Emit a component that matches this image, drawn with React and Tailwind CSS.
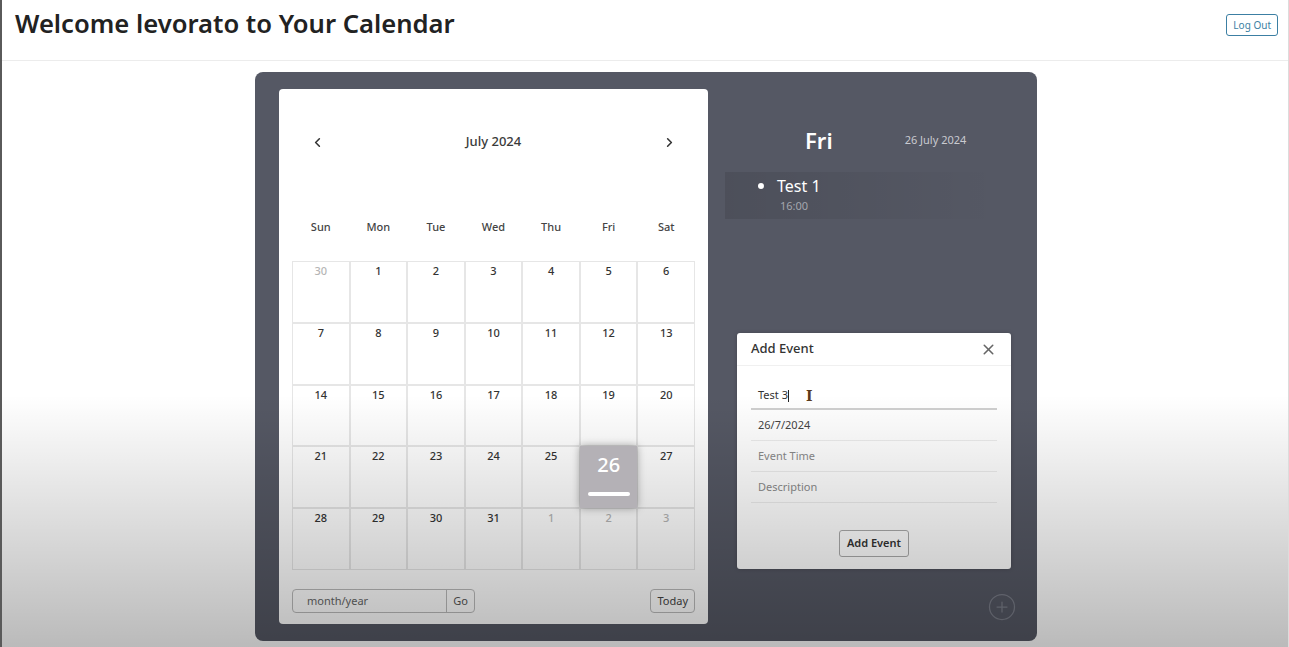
import { ChevronLeft, ChevronRight, X, CirclePlus } from 'lucide-react'

const DIAS = ['Sun', 'Mon', 'Tue', 'Wed', 'Thu', 'Fri', 'Sat']

const CELDAS = [
  [30, true], [1], [2], [3], [4], [5], [6],
  [7], [8], [9], [10], [11], [12], [13],
  [14], [15], [16], [17], [18], [19], [20],
  [21], [22], [23], [24], [25], [26, false, true], [27],
  [28], [29], [30], [31], [1, true], [2, true], [3, true],
]

function Calendario() {
  return (
    <div className="w-[429px] h-[535px] shrink-0 bg-white rounded-[4px] px-[13px] pt-[42px] flex flex-col">
      <div className="h-[22px] flex items-center justify-between px-[18px] text-[#333]">
        <ChevronLeft size={15} strokeWidth={2.5} />
        <span className="text-[13px] font-medium text-[#3a3a3a]">July 2024</span>
        <ChevronRight size={15} strokeWidth={2.5} />
      </div>
      <div className="mt-[64px] h-[20px] grid grid-cols-7 text-[11px] font-medium text-[#444] text-center items-center">
        {DIAS.map((d) => (
          <span key={d}>{d}</span>
        ))}
      </div>
      <div className="mt-[24px] grid grid-cols-7 grid-rows-5 h-[309px]">
        {CELDAS.map(([n, fuera, hoy], i) =>
          hoy ? (
            <div
              key={i}
              className="bg-[#b4b1b6] shadow-[0_0_8px_rgba(0,0,0,0.35)] flex flex-col items-center justify-between pt-[4px] pb-[12px] relative z-10"
            >
              <span className="text-[20px] text-white font-medium leading-[30px]">{n}</span>
              <span className="w-[42px] h-[4px] bg-white rounded-full" />
            </div>
          ) : (
            <div
              key={i}
              className={`border border-[#e6e6e6] text-center pt-[1px] text-[11px] font-medium ${
                fuera ? 'text-[#b5b5b5]' : 'text-[#333]'
              }`}
            >
              {n}
            </div>
          )
        )}
      </div>
      <div className="mt-[19px] flex items-center justify-between">
        <div className="flex h-[24px] border border-[#bbb] rounded-[4px] text-[11px] text-[#666]">
          <div className="w-[153px] pl-[14px] flex items-center">month/year</div>
          <div className="w-[28px] border-l border-[#bbb] flex items-center justify-center text-[#555]">Go</div>
        </div>
        <div className="h-[24px] px-[6px] border border-[#bbb] rounded-[4px] text-[11px] text-[#444] flex items-center">
          Today
        </div>
      </div>
    </div>
  )
}

function AgregarEvento() {
  return (
    <div className="ml-[29px] mt-[114px] w-[274px] h-[236px] bg-white rounded-[3px] flex flex-col shadow-[0_0_4px_rgba(0,0,0,0.2)]">
      <div className="h-[33px] border-b border-[#f0f0f0] flex items-center justify-between px-[14px]">
        <span className="text-[13px] font-medium text-[#333]">Add Event</span>
        <X size={17} strokeWidth={2.2} className="text-[#666]" />
      </div>
      <div className="px-[14px] pt-[17px] text-[11px]">
        <div className="h-[27px] border-b-2 border-[#cfcfcf] flex items-center pl-[7px] text-[#333] relative">
          <span>Test 3</span>
          <span className="w-px h-[12px] bg-[#222]" />
          <span className="absolute left-[55px] top-[6px] text-[#5b3a1c] font-bold text-[14px] leading-none font-['DejaVu_Serif',serif]">I</span>
        </div>
        <div className="h-[31px] border-b border-[#ececec] flex items-center pl-[7px] text-[#444]">26/7/2024</div>
        <div className="h-[31px] border-b border-[#ececec] flex items-center pl-[7px] text-[#8a8a8a]">Event Time</div>
        <div className="h-[31px] border-b border-[#ececec] flex items-center pl-[7px] text-[#8a8a8a]">Description</div>
      </div>
      <div className="flex justify-center mt-[27px]">
        <div className="h-[27px] px-[7px] border border-[#aaa] rounded-[3px] flex items-center text-[11px] font-semibold text-[#333]">
          Add Event
        </div>
      </div>
    </div>
  )
}

export default function App() {
  return (
    <div className="relative h-[647px] overflow-hidden bg-white border-l-2 border-l-[#5a5a5a] border-r border-r-[#dcdcdc] font-['Noto_Sans',sans-serif]">
      <header className="h-[61px] border-b border-[#ececec] flex items-start justify-between pl-[13px] pr-[10px]">
        <h1 className="mt-[5px] text-[25.6px] font-semibold text-[#222]">Welcome levorato to Your Calendar</h1>
        <button className="mt-[14px] h-[22px] px-[6px] border border-[#3c7fa3] rounded-[3px] text-[10px] text-[#3c7fa3]">
          Log Out
        </button>
      </header>

      <div className="flex justify-center pt-[11px] pl-[2px]">
        <div className="w-[782px] h-[569px] bg-[#555864] rounded-[8px] pl-[24px] pt-[17px] flex">
          <Calendario />
          <div className="flex-1 flex flex-col">
            <div className="h-[40px] mt-[31px] flex items-center">
              <span className="ml-[97px] text-[22px] font-semibold text-white">Fri</span>
              <span className="ml-[72px] text-[11px] text-[#c9cad0]">26 July 2024</span>
            </div>
            <div className="ml-[17px] mt-[12px] w-[275px] h-[47px] bg-gradient-to-r from-black/10 via-black/5 to-transparent pl-[33px] pt-[4px]">
              <div className="flex items-center gap-[13px] text-white">
                <span className="w-[6px] h-[6px] rounded-full bg-white" />
                <span className="text-[16px] leading-[20px]">Test 1</span>
              </div>
              <div className="ml-[22px] mt-[2px] text-[11px] text-[#a4a6ae]">16:00</div>
            </div>
            <AgregarEvento />
            <div className="flex justify-end pr-[20px] mt-[23px]">
              <CirclePlus size={30} strokeWidth={1} className="text-[#7a7d88]" />
            </div>
          </div>
        </div>
      </div>

      <div className="pointer-events-none absolute left-0 right-0 top-[395px] h-[252px] bg-gradient-to-b from-transparent to-black/27" />
    </div>
  )
}
